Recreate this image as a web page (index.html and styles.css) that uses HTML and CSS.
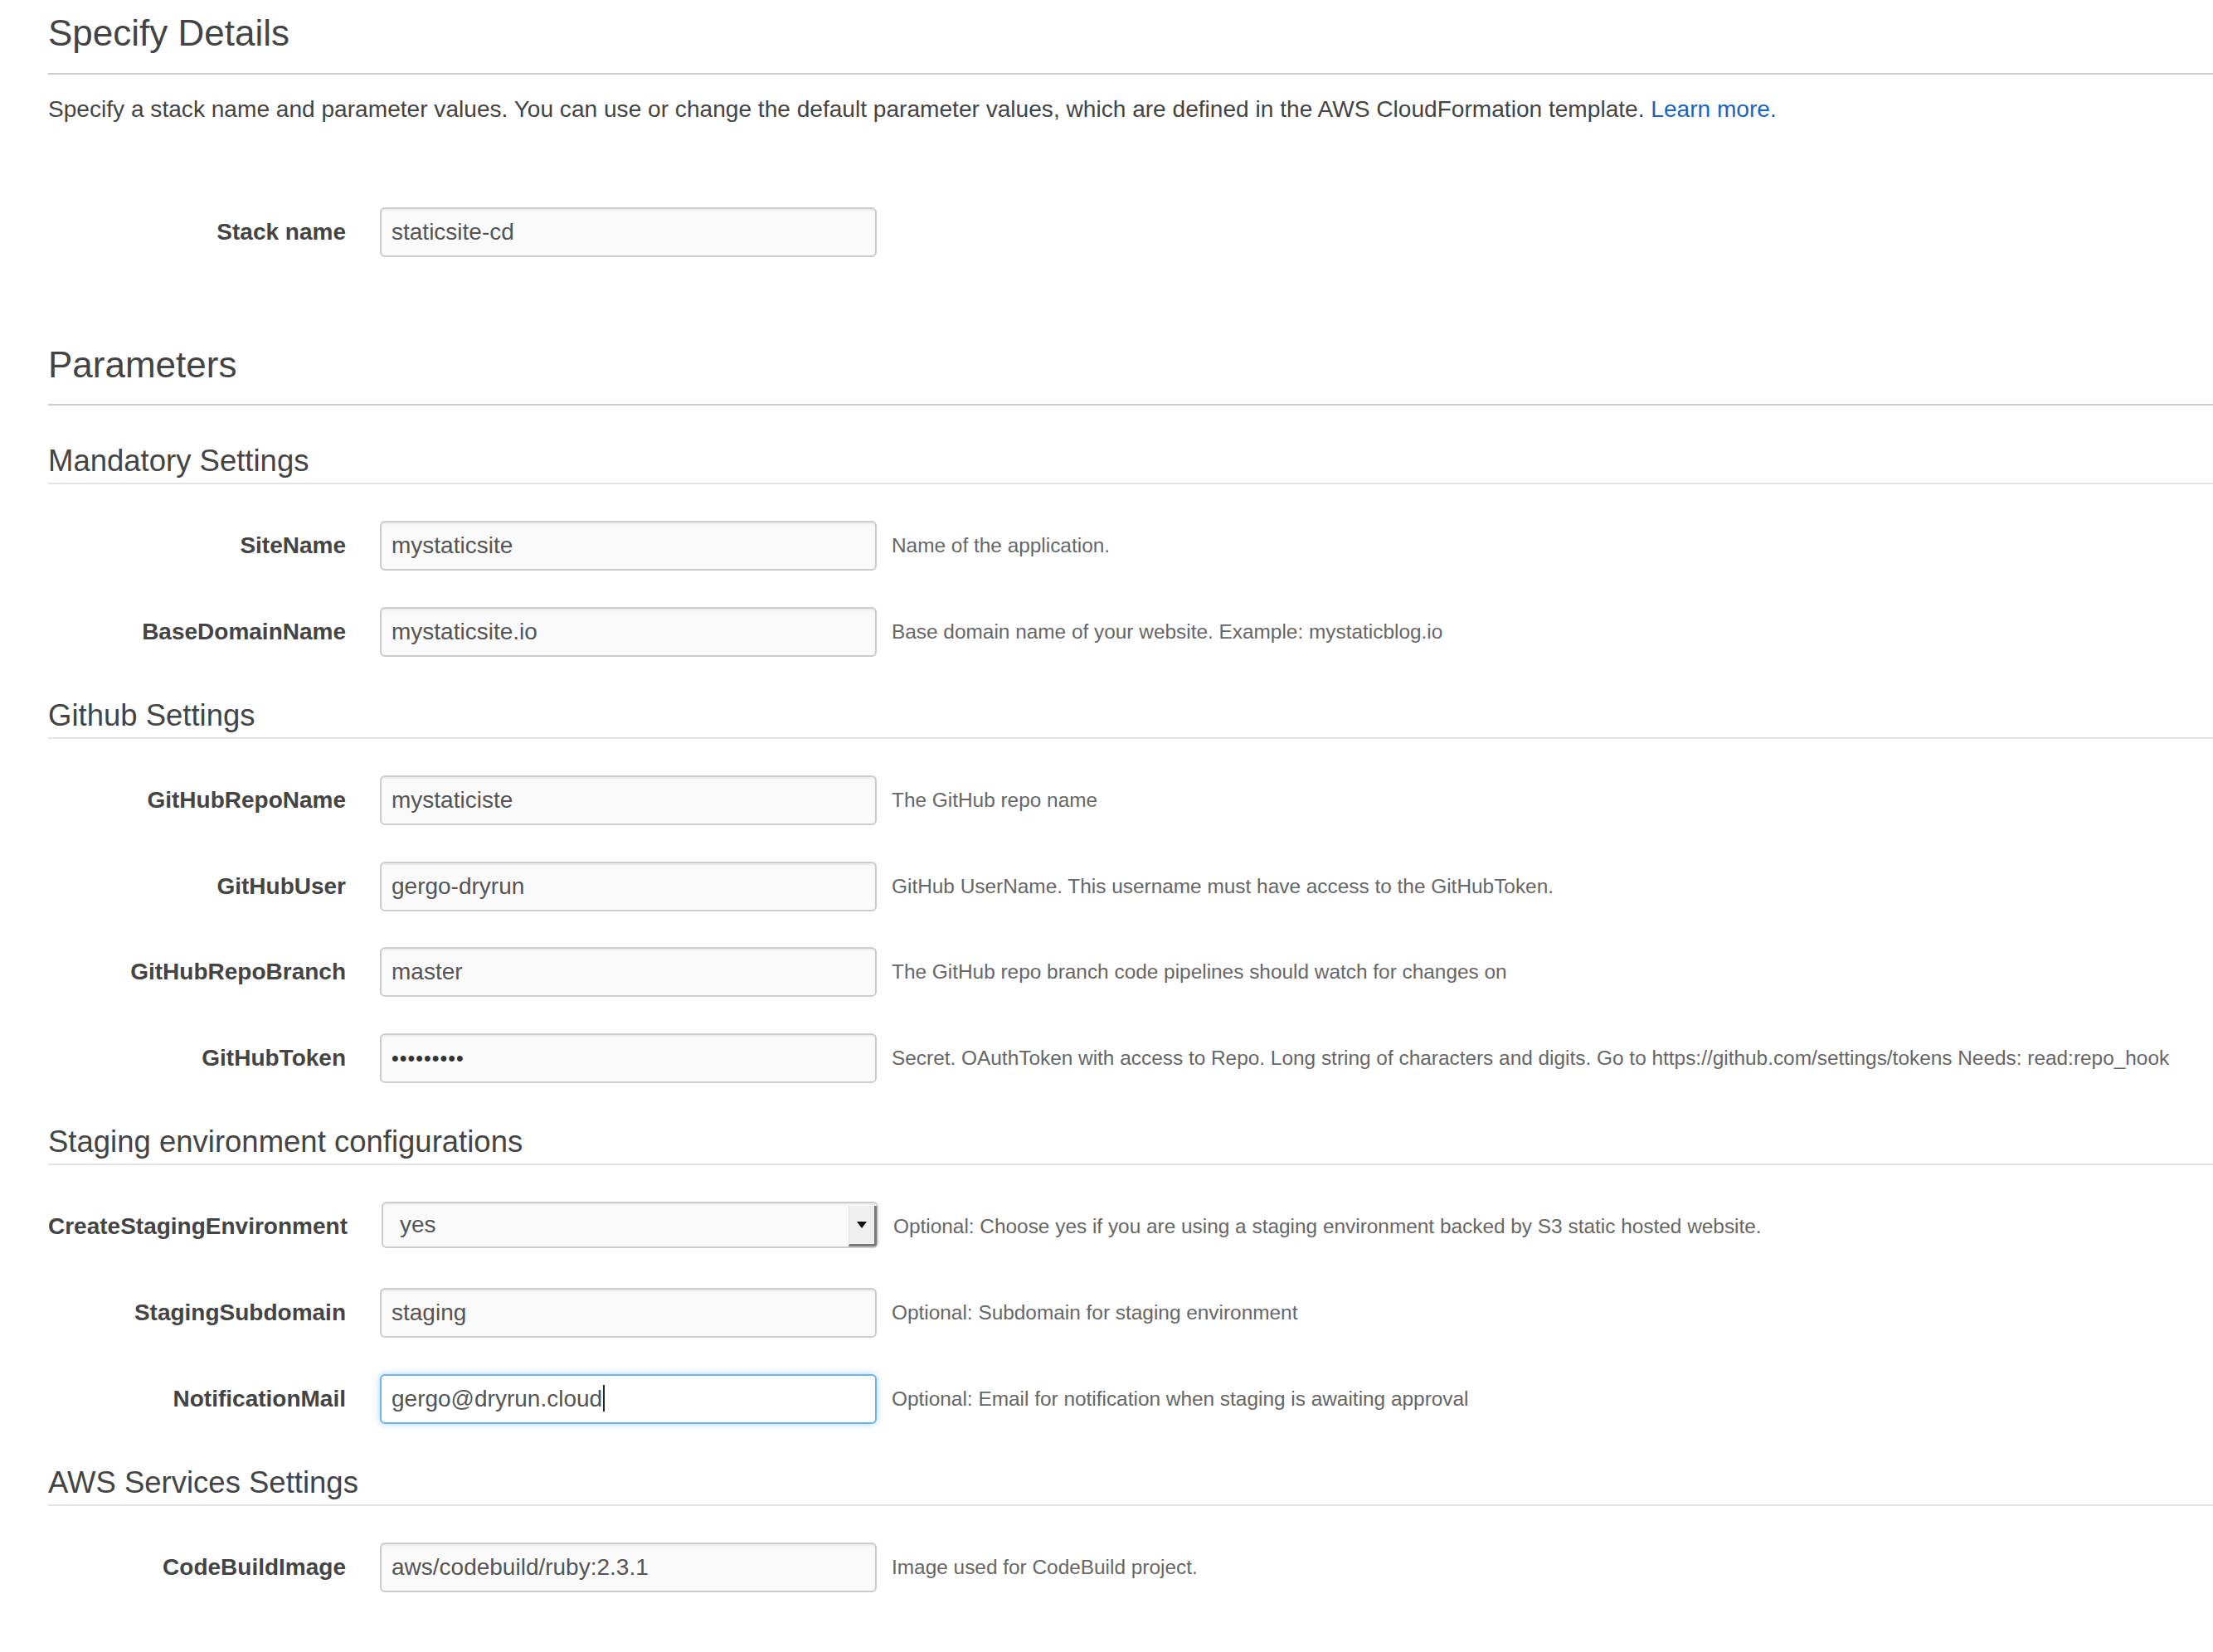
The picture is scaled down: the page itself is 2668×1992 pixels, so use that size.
FILE: index.html
```html
<!DOCTYPE html>
<html lang="en">
<head>
<meta charset="utf-8">
<title>Specify Details</title>
<link rel="stylesheet" href="styles.css">
</head>
<body>
<div class="page">
  <h1 class="page-title">Specify Details</h1>
  <p class="intro">Specify a stack name and parameter values. You can use or change the default parameter values, which are defined in the AWS CloudFormation template. <a class="link" href="#">Learn more.</a></p>

  <div class="field-row stack-row">
    <div class="field-label">Stack name</div>
    <div class="field-input">staticsite-cd</div>
  </div>

  <h2 class="page-title params-title">Parameters</h2>

  <section class="group">
    <h3 class="group-title">Mandatory Settings</h3>
    <div class="field-row">
      <div class="field-label">SiteName</div>
      <div class="field-input">mystaticsite</div>
      <div class="field-help">Name of the application.</div>
    </div>
    <div class="field-row">
      <div class="field-label">BaseDomainName</div>
      <div class="field-input">mystaticsite.io</div>
      <div class="field-help">Base domain name of your website. Example: mystaticblog.io</div>
    </div>
  </section>

  <section class="group">
    <h3 class="group-title">Github Settings</h3>
    <div class="field-row">
      <div class="field-label">GitHubRepoName</div>
      <div class="field-input">mystaticiste</div>
      <div class="field-help">The GitHub repo name</div>
    </div>
    <div class="field-row">
      <div class="field-label">GitHubUser</div>
      <div class="field-input">gergo-dryrun</div>
      <div class="field-help">GitHub UserName. This username must have access to the GitHubToken.</div>
    </div>
    <div class="field-row">
      <div class="field-label">GitHubRepoBranch</div>
      <div class="field-input">master</div>
      <div class="field-help">The GitHub repo branch code pipelines should watch for changes on</div>
    </div>
    <div class="field-row">
      <div class="field-label">GitHubToken</div>
      <div class="field-input password">&#8226;&#8226;&#8226;&#8226;&#8226;&#8226;&#8226;&#8226;&#8226;</div>
      <div class="field-help">Secret. OAuthToken with access to Repo. Long string of characters and digits. Go to https://github.com/settings/tokens Needs: read:repo_hook</div>
    </div>
  </section>

  <section class="group">
    <h3 class="group-title">Staging environment configurations</h3>
    <div class="field-row">
      <div class="field-label">CreateStagingEnvironment</div>
      <div class="field-select">
        <span class="select-value">yes</span>
        <span class="select-button"><span class="select-arrow"></span></span>
      </div>
      <div class="field-help">Optional: Choose yes if you are using a staging environment backed by S3 static hosted website.</div>
    </div>
    <div class="field-row">
      <div class="field-label">StagingSubdomain</div>
      <div class="field-input">staging</div>
      <div class="field-help">Optional: Subdomain for staging environment</div>
    </div>
    <div class="field-row">
      <div class="field-label">NotificationMail</div>
      <div class="field-input is-focused">gergo@dryrun.cloud<span class="caret"></span></div>
      <div class="field-help">Optional: Email for notification when staging is awaiting approval</div>
    </div>
  </section>

  <section class="group">
    <h3 class="group-title">AWS Services Settings</h3>
    <div class="field-row">
      <div class="field-label">CodeBuildImage</div>
      <div class="field-input">aws/codebuild/ruby:2.3.1</div>
      <div class="field-help">Image used for CodeBuild project.</div>
    </div>
  </section>
</div>
</body>
</html>
```

FILE: styles.css
```css
html, body {
  margin: 0;
  padding: 0;
  background: #ffffff;
}

body {
  font-family: "Liberation Sans", Arial, Helvetica, sans-serif;
  color: #444444;
  overflow: hidden;
}

.page {
  padding-left: 58px;
}

.page-title {
  margin: 14px 0 0;
  padding-bottom: 22px;
  border-bottom: 2px solid #cccccc;
  font-size: 44px;
  line-height: 52px;
  font-weight: normal;
  color: #444444;
}

.intro {
  margin: 22px 0 0;
  font-size: 28.1px;
  line-height: 40px;
  color: #444444;
  white-space: nowrap;
}

.link {
  color: #1765c1;
  text-decoration: none;
}

.stack-row {
  margin-top: 98px;
}

.params-title {
  margin-top: 104px;
  padding-bottom: 21px;
}

.group-title {
  margin: 49px 0 44px;
  padding-bottom: 4px;
  border-bottom: 2px solid #e4e4e4;
  font-size: 36.5px;
  line-height: 44px;
  font-weight: normal;
  color: #444444;
}

.params-title + .group .group-title {
  margin-top: 45px;
}

.field-row {
  display: flex;
  align-items: center;
  height: 60px;
  margin-bottom: 43.8px;
}

.field-label {
  flex: 0 0 359px;
  display: flex;
  justify-content: flex-end;
  margin-right: 41px;
  font-size: 28px;
  font-weight: bold;
  color: #444444;
  white-space: nowrap;
}

.field-input {
  box-sizing: border-box;
  flex: 0 0 599px;
  height: 60px;
  padding: 0 12px;
  border: 2px solid #cccccc;
  border-radius: 6px;
  background: #fafafa;
  box-shadow: inset 0 2px 2px rgba(0, 0, 0, 0.06);
  font-size: 28px;
  line-height: 56px;
  color: #555555;
  white-space: nowrap;
  overflow: hidden;
}

.field-input.password {
  font-size: 25px;
  letter-spacing: 1px;
  color: #333333;
}

.field-input.is-focused {
  border-color: #6db3ec;
  background: #ffffff;
  box-shadow: 0 0 8px rgba(102, 175, 233, 0.55);
}

.caret {
  display: inline-block;
  width: 2px;
  height: 32px;
  margin-left: 1px;
  background: #222222;
  vertical-align: -6px;
}

.field-select {
  box-sizing: border-box;
  flex: 0 0 599px;
  align-self: flex-start;
  display: flex;
  align-items: stretch;
  height: 56px;
  border: 2px solid #cccccc;
  border-radius: 6px;
  background: #fafafa;
  box-shadow: inset 0 2px 2px rgba(0, 0, 0, 0.05);
  overflow: hidden;
}

.select-value {
  flex: 1 1 auto;
  padding-left: 20px;
  font-size: 28px;
  line-height: 52px;
  color: #555555;
}

.select-button {
  flex: 0 0 30px;
  display: flex;
  align-items: center;
  justify-content: center;
  margin: 3px 0 0;
  background: #efefef;
  border-right: 3px solid #7a7a7a;
  border-bottom: 3px solid #7a7a7a;
  border-left: 1px solid #e2e2e2;
}

.select-arrow {
  width: 0;
  height: 0;
  border-left: 6px solid transparent;
  border-right: 6px solid transparent;
  border-top: 8px solid #111111;
}

.field-help {
  margin-left: 18px;
  font-size: 24.4px;
  color: #666666;
  white-space: nowrap;
}
```
